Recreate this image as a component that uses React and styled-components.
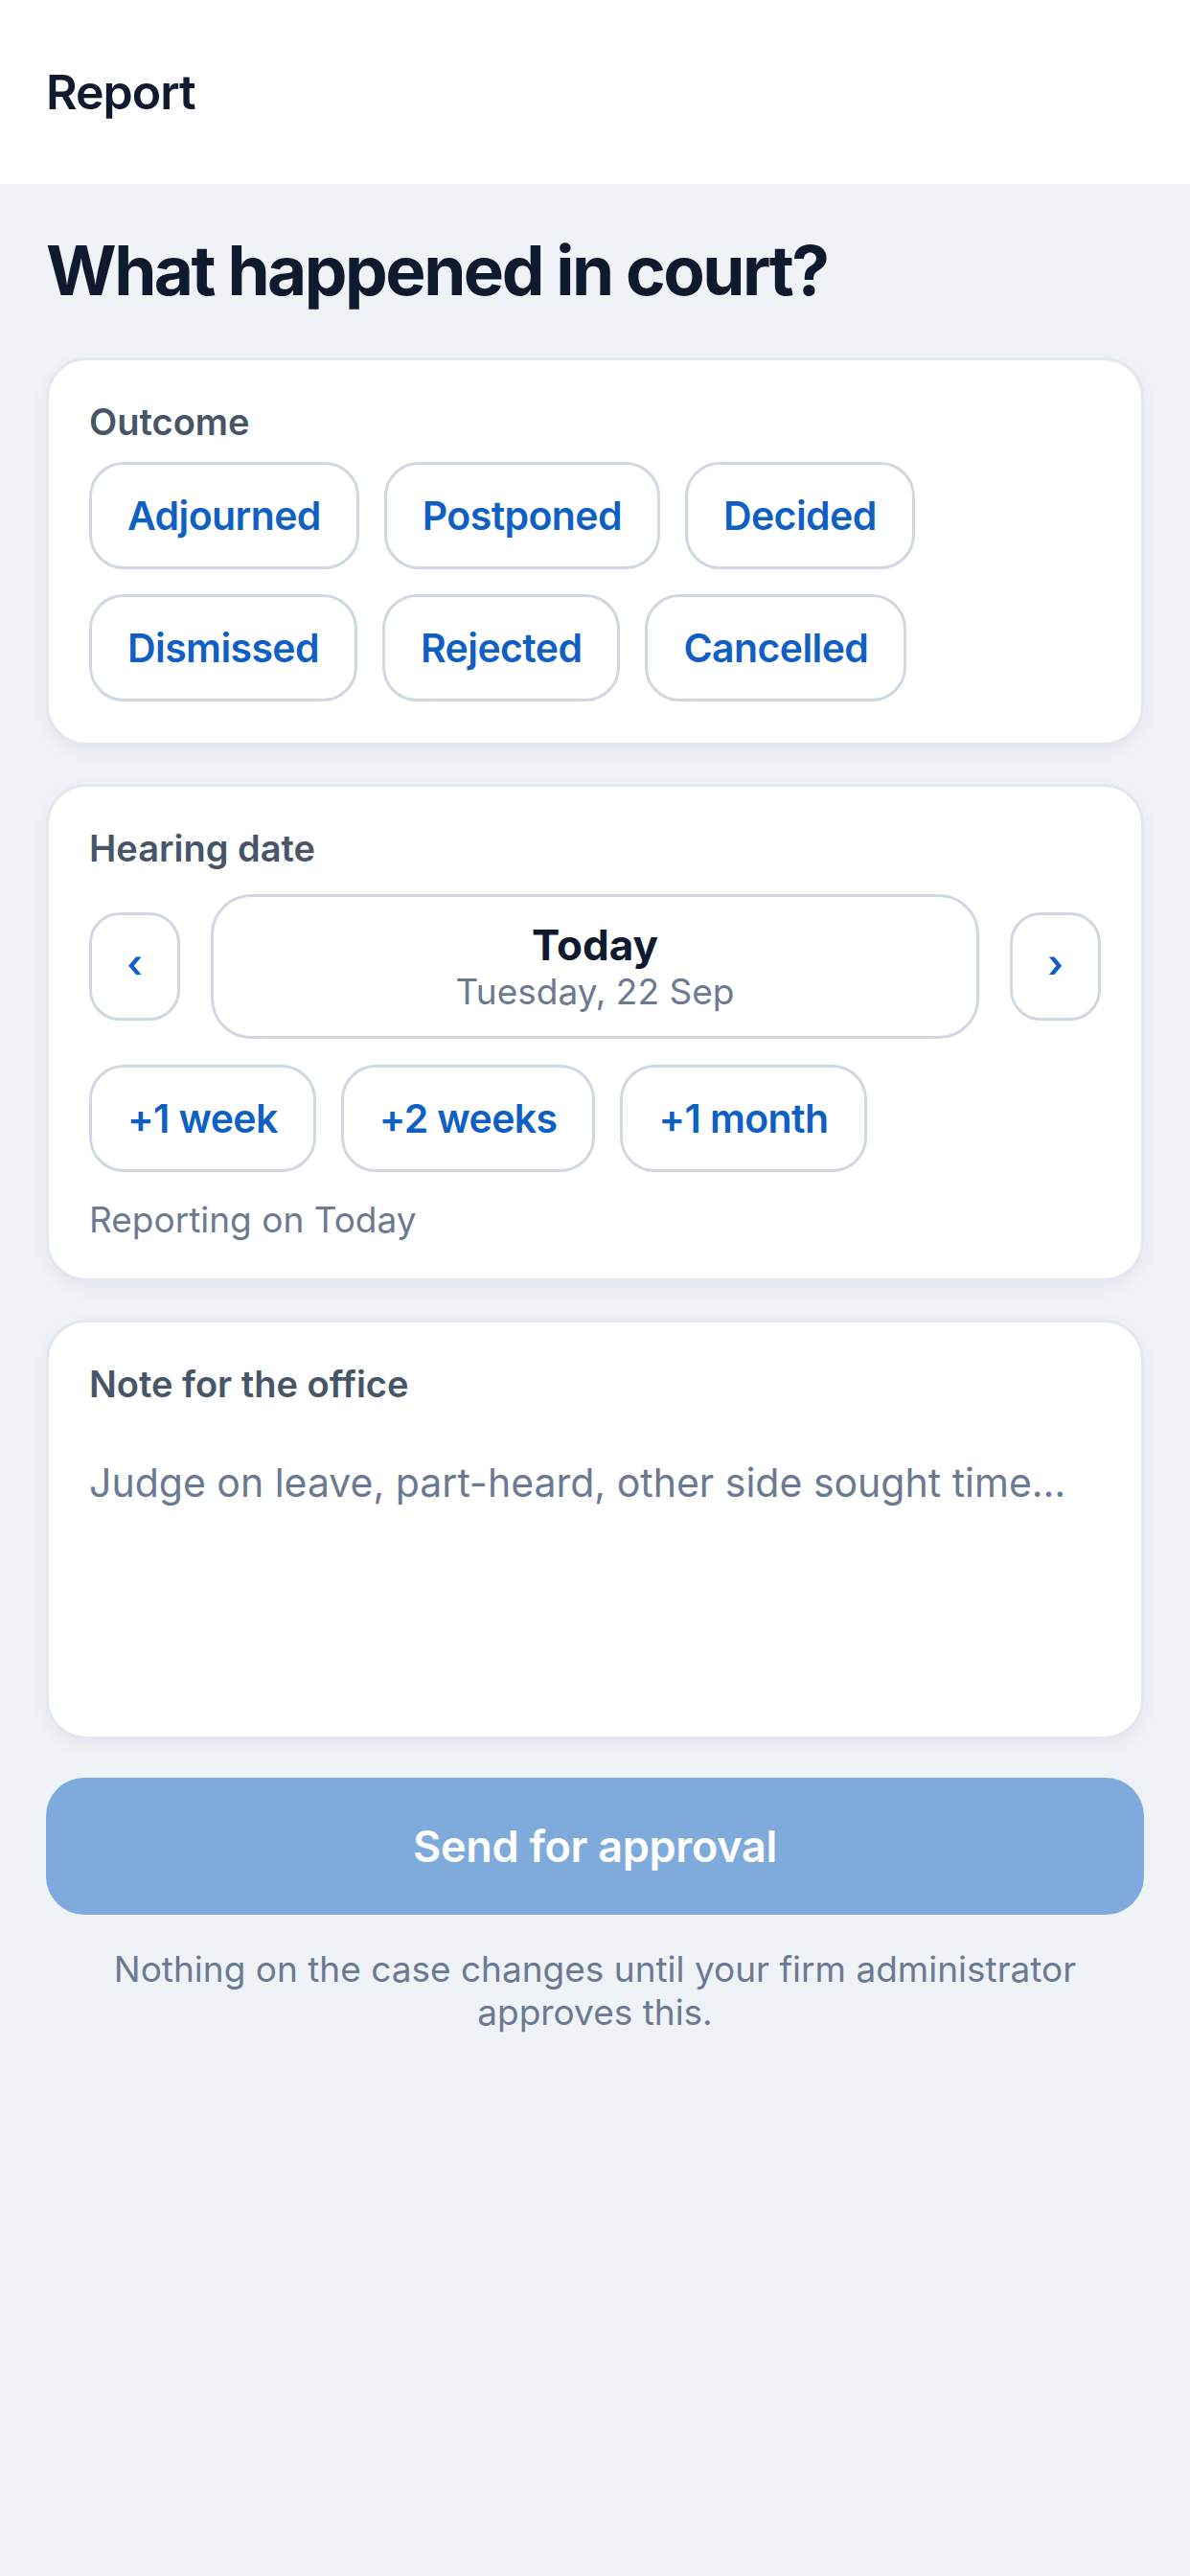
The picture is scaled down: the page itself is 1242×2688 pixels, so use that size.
import React, { useState } from "react";
import styled, { createGlobalStyle } from "styled-components";

const GlobalStyle = createGlobalStyle`
  html, body {
    margin: 0;
    padding: 0;
    background: #eff3f8;
  }
  body {
    font-family: Inter, "Noto Sans", "Liberation Sans", sans-serif;
    color: #0f1a2e;
    -webkit-font-smoothing: antialiased;
  }
  * {
    box-sizing: border-box;
  }
`;

const OUTCOMES = ["Adjourned", "Postponed", "Decided", "Dismissed", "Rejected", "Cancelled"];
const JUMPS = ["+1 week", "+2 weeks", "+1 month"];

const App = () => {
  const [outcome, setOutcome] = useState(null);
  const [note, setNote] = useState("");

  return (
    <Page>
      <GlobalStyle />
      <Header>
        <HeaderTitle>Report</HeaderTitle>
      </Header>
      <Main>
        <Title>What happened in court?</Title>

        <Card>
          <Label>Outcome</Label>
          <ChipWrap>
            {OUTCOMES.map(o => (
              <Chip key={o} active={outcome === o} onClick={() => setOutcome(o)}>
                {o}
              </Chip>
            ))}
          </ChipWrap>
        </Card>

        <Card>
          <Label>Hearing date</Label>
          <DateRow>
            <ArrowButton aria-label="Previous day">‹</ArrowButton>
            <DateBox>
              <DateMain>Today</DateMain>
              <DateSub>Tuesday, 22 Sep</DateSub>
            </DateBox>
            <ArrowButton aria-label="Next day">›</ArrowButton>
          </DateRow>
          <ChipWrap>
            {JUMPS.map(j => (
              <Chip key={j}>{j}</Chip>
            ))}
          </ChipWrap>
          <Hint>Reporting on Today</Hint>
        </Card>

        <Card>
          <Label>Note for the office</Label>
          <NoteInput
            value={note}
            onChange={e => setNote(e.target.value)}
            placeholder="Judge on leave, part-heard, other side sought time…"
          />
        </Card>

        <SubmitButton disabled={!outcome}>Send for approval</SubmitButton>
        <Footnote>
          Nothing on the case changes until your firm administrator approves this.
        </Footnote>
      </Main>
    </Page>
  );
};

export default App;

const Page = styled.div`
  min-height: 2688px;
  background: #eff3f8;
`
const Header = styled.header`
  height: 192px;
  background: #ffffff;
  display: flex;
  align-items: center;
  padding: 0 48px;
`
const HeaderTitle = styled.h1`
  margin: 0;
  font-size: 50px;
  font-weight: 600;
  letter-spacing: -1px;
  color: #0f1a2e;
`
const Main = styled.main`
  padding: 0 48px 48px;
  display: flex;
  flex-direction: column;
`
const Title = styled.h2`
  margin: 48px 0 48px;
  font-size: 71px;
  line-height: 1.2;
  font-weight: 700;
  letter-spacing: -2.5px;
  color: #0f1a2e;
`
const Card = styled.section`
  background: #ffffff;
  border: 3px solid #e3e8f0;
  border-radius: 42px;
  padding: 42px 42px 43px;
  box-shadow: 0 6px 20px rgba(15, 23, 42, 0.05);
  margin-bottom: 40px;
`
const Label = styled.div`
  font-size: 38px;
  line-height: 1.2;
  font-weight: 600;
  color: #475569;
  margin-bottom: 18px;
`
const ChipWrap = styled.div`
  display: flex;
  flex-wrap: wrap;
  gap: 26px;
`
const Chip = styled.button`
  height: 112px;
  padding: 0 37px;
  border: 3px solid ${p => (p.active ? "#0f5fc4" : "#cfd8e3")};
  border-radius: 36px;
  background: ${p => (p.active ? "#e8f0fb" : "#ffffff")};
  color: #0f5fc4;
  font-family: inherit;
  font-size: 41px;
  font-weight: 600;
  letter-spacing: -0.6px;
  display: inline-flex;
  align-items: center;
  cursor: pointer;
`
const DateRow = styled.div`
  display: flex;
  align-items: center;
  gap: 32px;
  margin: 25px 0 27px;
`
const ArrowButton = styled.button`
  width: 95px;
  height: 113px;
  flex: none;
  border: 3px solid #cfd8e3;
  border-radius: 32px;
  background: #ffffff;
  color: #0f5fc4;
  font-family: inherit;
  font-size: 40px;
  font-weight: 600;
  display: flex;
  align-items: center;
  justify-content: center;
  padding: 0 0 6px;
  cursor: pointer;
`
const DateBox = styled.div`
  flex: 1;
  height: 151px;
  border: 3px solid #cfd8e3;
  border-radius: 42px;
  display: flex;
  flex-direction: column;
  align-items: center;
  justify-content: center;
`
const DateMain = styled.div`
  font-size: 44px;
  line-height: 1.2;
  font-weight: 700;
  color: #0f1a2e;
`
const DateSub = styled.div`
  font-size: 37px;
  line-height: 1.2;
  font-weight: 400;
  color: #6b7a92;
`
const Hint = styled.div`
  margin-top: 31px;
  font-size: 37px;
  line-height: 1;
  color: #6b7a92;
`
const NoteInput = styled.textarea`
  display: block;
  width: 100%;
  height: 283px;
  margin: 0;
  padding: 35px 0 0;
  border: none;
  outline: none;
  resize: none;
  background: transparent;
  font-family: inherit;
  font-size: 41px;
  line-height: 1.3;
  color: #0f1a2e;
  &::placeholder {
    color: #6b7a92;
  }
`
const SubmitButton = styled.button`
  height: 143px;
  width: 100%;
  border: none;
  border-radius: 40px;
  background: ${p => (p.disabled ? "#7eaadc" : "#0f5fc4")};
  color: #ffffff;
  font-family: inherit;
  font-size: 45px;
  font-weight: 600;
  letter-spacing: -0.3px;
  cursor: pointer;
`
const Footnote = styled.p`
  margin: 34px 60px 0;
  text-align: center;
  font-size: 37px;
  line-height: 45px;
  color: #6b7a92;
`
